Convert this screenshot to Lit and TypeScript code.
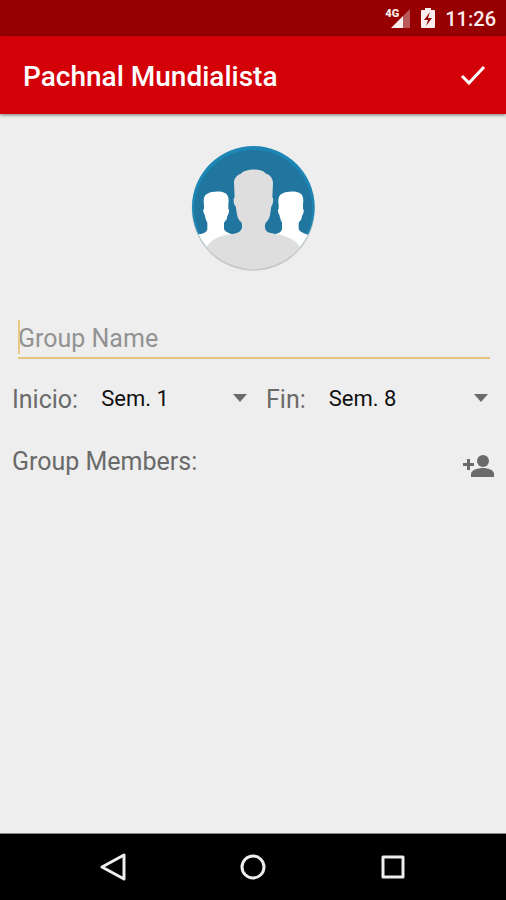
import { LitElement, html, css } from "lit";
import { customElement, property, state } from "lit/decorators.js";

const WEEKS = [1, 2, 3, 4, 5, 6, 7, 8];

@customElement("status-bar")
class StatusBar extends LitElement {
  static styles = css`
    :host {
      display: flex;
      align-items: center;
      justify-content: flex-end;
      gap: 10px;
      height: 36px;
      padding: 2px 10px 0 0;
      box-sizing: border-box;
      background: #960000;
      color: #fbeeee;
      font-size: 20px;
      font-weight: 500;
      line-height: 24px;
    }
    .signal {
      position: relative;
      width: 26px;
      height: 22px;
    }
    .network {
      position: absolute;
      left: 0;
      top: 0;
      font-size: 11px;
      line-height: 12px;
      font-weight: 900;
    }
    svg {
      display: block;
    }
  `;

  render() {
    return html`
      <div class="signal">
        <svg width="26" height="22" viewBox="0 0 26 22" aria-hidden="true">
          <path d="M25 1V20H18V8z" fill="#fff" opacity=".35" />
          <path d="M18 8V20H6z" fill="#fbeeee" />
        </svg>
        <span class="network">4G</span>
      </div>
      <svg width="14" height="22" viewBox="0 0 14 22" aria-hidden="true">
        <path
          fill="#fbeeee"
          fill-rule="evenodd"
          d="M4 0h6v2h3q1 0 1 1v16q0 1-1 1H1q-1 0-1-1V3q0-1 1-1h3zM9 4L3 12h4L5 18l6-8H7z"
        />
      </svg>
      <span>11:26</span>
    `;
  }
}

@customElement("group-avatar")
class GroupAvatar extends LitElement {
  static styles = css`
    :host {
      display: block;
      width: 140px;
      height: 140px;
    }
    svg {
      display: block;
      width: 100%;
      height: 100%;
    }
  `;

  render() {
    return html`
      <svg viewBox="0 0 420 420" role="img" aria-label="Group picture">
        <defs>
          <clipPath id="disc"><circle cx="211" cy="208" r="184" /></clipPath>
          <path
            id="side"
            d="M-37 -2C-40 -20 -36 -31 -27 -35C-16 -43 14 -44 24 -38C35 -34 39 -22 36 -3L36 10C40 13 38 24 35 28C33 31 32 36 31 42L23 52L23 70C26 80 38 84 58 90L140 130V240H-140V130L-58 88C-40 86 -30 82 -27 72V52C-31 44 -33 37 -35 28C-39 23 -41 13 -37 10Z"
          />
        </defs>
        <circle cx="211" cy="213" r="185" fill="#c9c9c9" />
        <g clip-path="url(#disc)">
          <rect width="420" height="420" fill="#1e86b5" />
          <circle cx="211" cy="213" r="177" fill="#20769f" />
          <use href="#side" x="100" y="202" fill="#fff" />
          <use href="#side" x="324" y="202" fill="#fff" />
          <path
            fill="#dedede"
            d="M155 178L153 135C153 119 162 111 174 107C184 92 235 88 249 107C262 111 270 120 270 137L268 178C273 181 270 200 265 205L261 231Q259 245 248 254C244 264 245 275 253 281C268 289 302 288 327 304C342 312 351 324 358 338V420H66V338C73 320 84 308 102 299C128 287 155 290 169 281C178 275 179 262 175 253Q164 244 162 229L158 205C152 200 149 182 155 178Z"
          />
        </g>
      </svg>
    `;
  }
}

@customElement("week-field")
class WeekField extends LitElement {
  static styles = css`
    :host {
      display: flex;
      align-items: center;
      gap: 23px;
      min-width: 0;
    }
    label {
      padding-top: 4px;
      color: #6a6a6a;
      font-size: 25px;
      line-height: 32px;
    }
    .picker {
      display: flex;
      align-items: center;
      position: relative;
      flex: 1;
      min-width: 0;
    }
    select {
      appearance: none;
      width: 100%;
      height: 48px;
      margin: 0;
      padding: 0 20px 0 0;
      border: 0;
      outline: 0;
      background: none;
      color: #111;
      font: inherit;
      font-size: 22px;
    }
    .arrow {
      position: absolute;
      right: 0;
      pointer-events: none;
    }
  `;

  @property() label = "";
  @property({ type: Number }) week = 1;

  render() {
    return html`
      <label for="week">${this.label}</label>
      <div class="picker">
        <select id="week">
          ${WEEKS.map(
            (w) => html`<option value=${w} ?selected=${w === this.week}>Sem. ${w}</option>`
          )}
        </select>
        <svg class="arrow" width="14" height="8" viewBox="0 0 14 8" aria-hidden="true">
          <path d="M0 0H14L7 8z" fill="#6a6a6a" />
        </svg>
      </div>
    `;
  }
}

@customElement("app-root")
class AppRoot extends LitElement {
  static styles = css`
    :host {
      display: flex;
      flex-direction: column;
      min-height: 100vh;
      background: #eee;
      font-family: Roboto, "Liberation Sans", sans-serif;
    }
    button {
      display: flex;
      align-items: center;
      justify-content: center;
      padding: 0;
      border: 0;
      background: none;
      color: inherit;
    }
    svg {
      display: block;
    }
    .app-bar {
      display: flex;
      align-items: center;
      justify-content: space-between;
      height: 78px;
      padding: 0 12px 0 23px;
      background: #d40008;
      color: #fff;
      box-shadow: 0 1px 3px rgba(0, 0, 0, 0.5);
    }
    h1 {
      margin: 0;
      padding-top: 4px;
      font-size: 28px;
      line-height: 36px;
      font-weight: 500;
    }
    .done {
      width: 42px;
      height: 48px;
    }
    main {
      flex: 1;
      display: flex;
      flex-direction: column;
    }
    .avatar {
      align-self: center;
      margin-top: 24px;
    }
    .name {
      position: relative;
      margin: 40px 16px 0 18px;
    }
    .name input {
      display: block;
      width: 100%;
      height: 41px;
      box-sizing: border-box;
      margin: 0;
      padding: 2px 0 0;
      border: 0;
      border-bottom: 2px solid #e5c37c;
      border-radius: 0;
      outline: 0;
      background: none;
      color: #1a1a1a;
      caret-color: transparent;
      font: inherit;
      font-size: 25px;
    }
    .name input::placeholder {
      color: #929292;
      opacity: 1;
    }
    .caret {
      position: absolute;
      left: 0;
      top: 2px;
      width: 2px;
      height: 34px;
      background: #e9c883;
    }
    .weeks {
      display: grid;
      grid-template-columns: 1fr 1fr;
      margin-top: 15px;
    }
    .start {
      padding: 0 6px 0 12px;
    }
    .end {
      padding: 0 18px 0 13px;
    }
    .members {
      display: flex;
      align-items: center;
      justify-content: space-between;
      margin-top: 16px;
      padding: 0 12px;
      color: #6a6a6a;
    }
    h2 {
      margin: 0;
      font-size: 25px;
      line-height: 48px;
      font-weight: 400;
    }
    .add {
      height: 48px;
      align-items: flex-end;
      padding-bottom: 8px;
      box-sizing: border-box;
    }
    .nav {
      display: flex;
      align-items: center;
      justify-content: center;
      gap: 92px;
      height: 66px;
      border-top: 1px solid #888;
      background: #000;
      color: #eee;
    }
    .nav button {
      width: 48px;
      height: 48px;
    }
  `;

  @state() private groupName = "";

  private onName(e: Event) {
    this.groupName = (e.target as HTMLInputElement).value;
  }

  render() {
    return html`
      <status-bar></status-bar>
      <header class="app-bar">
        <h1>Pachnal Mundialista</h1>
        <button class="done" aria-label="Done">
          <svg width="26" height="20" viewBox="0 0 26 20" aria-hidden="true">
            <path d="M2 11l7 7L24 2" fill="none" stroke="currentColor" stroke-width="3" />
          </svg>
        </button>
      </header>
      <main>
        <group-avatar class="avatar"></group-avatar>
        <div class="name">
          <input
            type="text"
            aria-label="Group Name"
            placeholder="Group Name"
            .value=${this.groupName}
            @input=${this.onName}
          />
          ${this.groupName ? "" : html`<span class="caret"></span>`}
        </div>
        <div class="weeks">
          <week-field class="start" label="Inicio:" .week=${1}></week-field>
          <week-field class="end" label="Fin:" .week=${8}></week-field>
        </div>
        <div class="members">
          <h2>Group Members:</h2>
          <button class="add" aria-label="Add member">
            <svg width="32" height="24" viewBox="0 0 32 24" aria-hidden="true">
              <g fill="currentColor">
                <circle cx="21" cy="7" r="6" />
                <path d="M9 23V20C9 16 16 14 21 14S32 16 32 20V23z" />
                <path d="M5 5H8V9H12V12H8V16H5V12H1V9H5z" />
              </g>
            </svg>
          </button>
        </div>
      </main>
      <nav class="nav" aria-label="System">
        <button aria-label="Back">
          <svg width="28" height="28" viewBox="0 0 28 28" aria-hidden="true">
            <path d="M25 2V26L3 14z" fill="none" stroke="currentColor" stroke-width="3" stroke-linejoin="round" />
          </svg>
        </button>
        <button aria-label="Home">
          <svg width="28" height="28" viewBox="0 0 28 28" aria-hidden="true">
            <circle cx="14" cy="14" r="11" fill="none" stroke="currentColor" stroke-width="3" />
          </svg>
        </button>
        <button aria-label="Overview">
          <svg width="28" height="28" viewBox="0 0 28 28" aria-hidden="true">
            <rect x="4" y="4" width="20" height="20" fill="none" stroke="currentColor" stroke-width="3" stroke-linejoin="round" />
          </svg>
        </button>
      </nav>
    `;
  }
}
